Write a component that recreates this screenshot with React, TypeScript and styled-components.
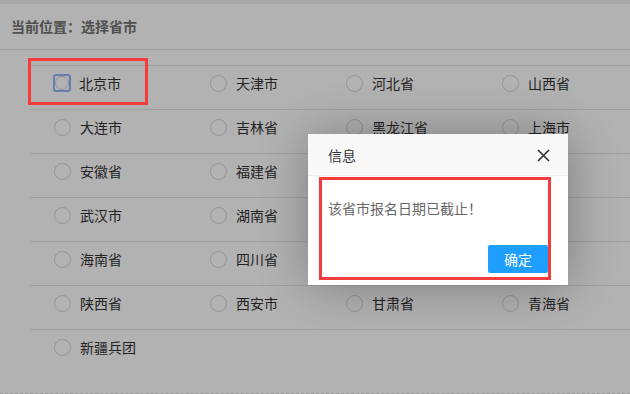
import React from 'react';
import styled, { createGlobalStyle } from 'styled-components';

const GlobalStyle = createGlobalStyle`
  html, body {
    margin: 0;
    padding: 0;
    background: #fff;
  }
  body {
    font-family: "Noto Sans CJK SC", "Noto Sans", "Liberation Sans", sans-serif;
  }
`

const Page = styled.div`
  position: relative;
  width: 630px;
  height: 394px;
  overflow: hidden;
  background: #fff;
`

const TopBar = styled.div`
  height: 4px;
  background: #f0f0f0;
`

const Crumb = styled.div`
  height: 45px;
  line-height: 45px;
  padding-left: 11px;
  font-size: 14px;
  font-weight: bold;
  color: #737373;
  border-bottom: 1px solid #e6e6e6;
`

const List = styled.div`
  margin: 15px 0 0 30px;
`

const Row = styled.div`
  display: grid;
  grid-template-columns: 156px 136px 156px 1fr;
  height: 44px;
  padding: 7px 0 0 24px;
  box-sizing: border-box;
  border-top: 1px solid #e6e6e6;
`

const Item = styled.label`
  display: flex;
  align-items: center;
  gap: 9px;
  height: 20px;
  font-size: 14px;
  color: #333;
  white-space: nowrap;
`

const Radio = styled.span<{ size?: number }>`
  width: ${({ size }) => size ?? 17}px;
  height: ${({ size }) => size ?? 17}px;
  border: 1px solid #d4d4d4;
  border-radius: 50%;
  box-sizing: border-box;
  background: #fff;
`

const FocusRing = styled.span`
  display: flex;
  align-items: center;
  justify-content: center;
  width: 18px;
  height: 18px;
  border: 2px solid #93b4ff;
  border-radius: 3px;
  box-sizing: border-box;
  margin: 0 -1px;
`

const Footer = styled.div`
  position: absolute;
  left: 0;
  right: 0;
  bottom: 0;
  border-bottom: 1px dashed #e0e0e0;
`

const Shade = styled.div`
  position: absolute;
  inset: 0;
  background: rgba(0, 0, 0, 0.3);
`

const Dialog = styled.div`
  position: absolute;
  left: 308px;
  top: 134px;
  width: 260px;
  height: 151px;
  background: #fff;
  box-shadow: 1px 1px 50px rgba(0, 0, 0, 0.3);
  display: flex;
  flex-direction: column;
`

const DialogTitle = styled.div`
  position: relative;
  height: 41px;
  line-height: 42px;
  padding-left: 20px;
  background: #f8f8f8;
  border-bottom: 1px solid #eee;
  font-size: 14px;
  color: #333;
`

const Close = styled.span`
  position: absolute;
  right: 18px;
  top: 15px;
  width: 13px;
  height: 13px;
  line-height: 0;
`

const DialogBody = styled.div`
  flex: 1;
  padding: 20px 20px 0 20px;
  line-height: 24px;
  font-size: 14px;
  color: #666;
`

const BtnBar = styled.div`
  display: flex;
  justify-content: flex-end;
  padding: 0 20px 12px 0;
`

const Btn = styled.span`
  height: 28px;
  line-height: 28px;
  padding: 0 16px;
  background: #1e9fff;
  border-radius: 2px;
  color: #fff;
  font-size: 14px;
`

const Mark = styled.div<{ x: number; y: number; w: number; h: number }>`
  position: absolute;
  left: ${({ x }) => x}px;
  top: ${({ y }) => y}px;
  width: ${({ w }) => w}px;
  height: ${({ h }) => h}px;
  border: 3px solid #f33c3c;
  box-sizing: border-box;
`

// cells hidden under the dialog are left empty
const rows = [
  ['北京市', '天津市', '河北省', '山西省'],
  ['大连市', '吉林省', '黑龙江省', '上海市'],
  ['安徽省', '福建省'],
  ['武汉市', '湖南省'],
  ['海南省', '四川省'],
  ['陕西省', '西安市', '甘肃省', '青海省'],
  ['新疆兵团'],
]

export default function App() {
  return (
    <Page>
      <GlobalStyle />
      <TopBar />
      <Crumb>当前位置：选择省市</Crumb>
      <List>
        {rows.map((r, i) => (
          <Row key={i}>
            {r.map((name, j) => (
              <Item key={name}>
                {i === 0 && j === 0 ? (
                  <FocusRing>
                    <Radio size={14} />
                  </FocusRing>
                ) : (
                  <Radio />
                )}
                {name}
              </Item>
            ))}
          </Row>
        ))}
      </List>
      <Footer />
      <Shade />
      <Dialog>
        <DialogTitle>
          信息
          <Close>
            <svg width="13" height="13" viewBox="0 0 13 13">
              <path d="M1 1L12 12M12 1L1 12" stroke="#2f2f2f" strokeWidth="1.6" />
            </svg>
          </Close>
        </DialogTitle>
        <DialogBody>该省市报名日期已截止！</DialogBody>
        <BtnBar>
          <Btn>确定</Btn>
        </BtnBar>
      </Dialog>
      <Mark x={28} y={58} w={120} h={47} />
      <Mark x={319} y={177} w={232} h={103} />
    </Page>
  );
}
